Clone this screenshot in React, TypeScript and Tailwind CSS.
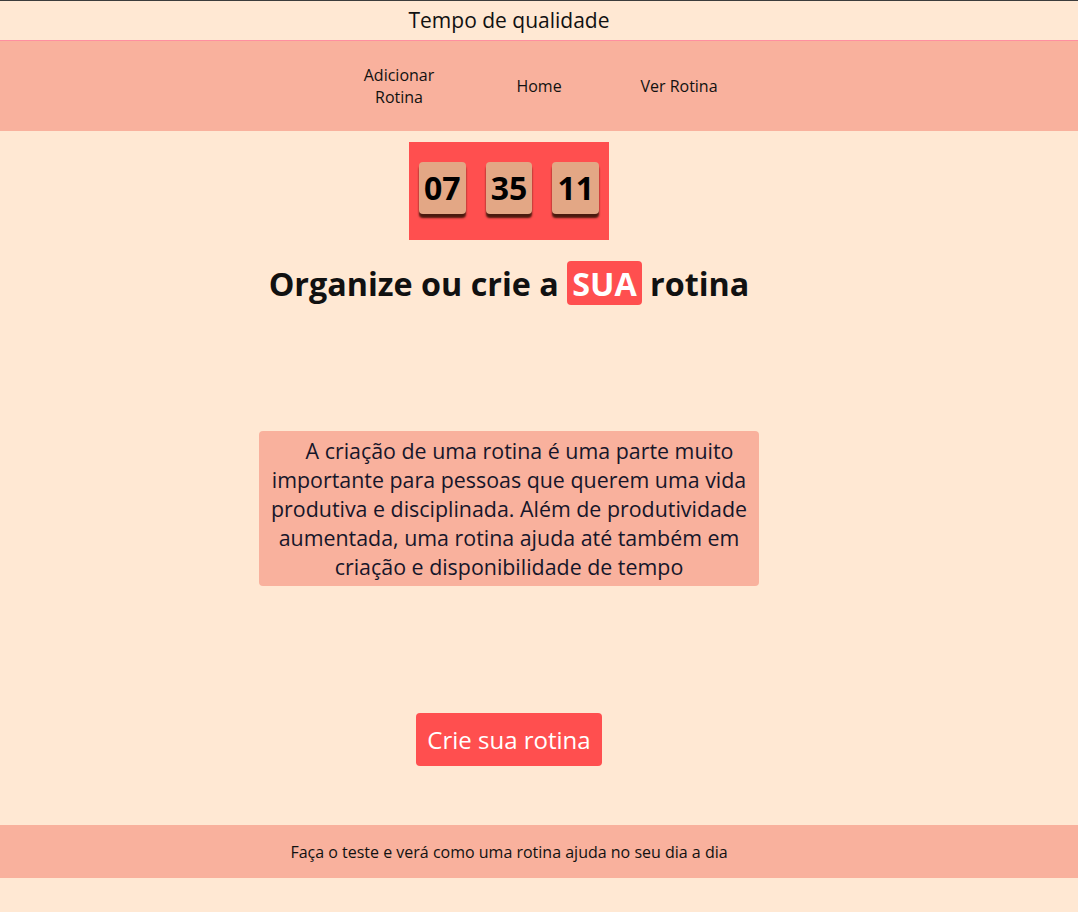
import React from "react";

const font = { fontFamily: '"Open Sans", "Noto Sans", sans-serif' };

const Digit = ({ value }: { value: string }) => (
  <div className="flex h-[52px] w-[47px] items-center justify-center rounded-[4px] bg-[#e3a785] text-[32px] font-bold leading-none text-black shadow-[0_4px_2px_#4a1a0e]">
    {value}
  </div>
);

const App = () => {
  const navItems = ["Adicionar Rotina", "Home", "Ver Rotina"];

  return (
    <div className="min-h-[912px] bg-[#ffe8d3] text-[#111]" style={font}>
      <header className="border-t border-[#3c3c3c]">
        <div className="h-[40px] border-b border-[#ff8fa0]">
          <div className="flex h-full w-[1018px] items-center justify-center text-[21px]">
            Tempo de qualidade
          </div>
        </div>
        <nav className="flex h-[90px] items-center justify-center gap-[40px] bg-[#f9b19d] text-[16px] leading-[22px]">
          {navItems.map((item) => (
            <a key={item} className="w-[100px] cursor-pointer text-center">
              {item}
            </a>
          ))}
        </nav>
      </header>

      <main className="flex w-[1018px] flex-col items-center">
        <div className="mt-[11px] flex h-[98px] w-[200px] items-start gap-[20px] bg-[#ff4f4f] px-[10px] pt-[20px]">
          <Digit value="07" />
          <Digit value="35" />
          <Digit value="11" />
        </div>

        <h1 className="mt-[22px] text-[32.3px] font-bold leading-[43px]">
          Organize ou crie a{" "}
          <span className="rounded-[4px] bg-[#ff4f4f] px-[5px] text-white">SUA</span>{" "}
          rotina
        </h1>

        <p className="mt-[126px] w-[500px] rounded-[4px] bg-[#f9b19d] px-[10px] py-[5px] text-center indent-[21px] text-[21.4px] leading-[29px] text-[#16162a]">
          A criação de uma rotina é uma parte muito importante para pessoas que querem uma vida
          produtiva e disciplinada. Além de produtividade aumentada, uma rotina ajuda até também em
          criação e disponibilidade de tempo
        </p>

        <button className="mt-[127px] h-[53px] rounded-[4px] bg-[#ff4f4f] px-[11px] text-[24px] text-white">
          Crie sua rotina
        </button>
      </main>

      <footer className="mt-[59px] h-[53px] bg-[#f9b19d]">
        <div className="flex h-full w-[1018px] items-center justify-center text-[16px]">
          Faça o teste e verá como uma rotina ajuda no seu dia a dia
        </div>
      </footer>
    </div>
  );
};

export default App;
